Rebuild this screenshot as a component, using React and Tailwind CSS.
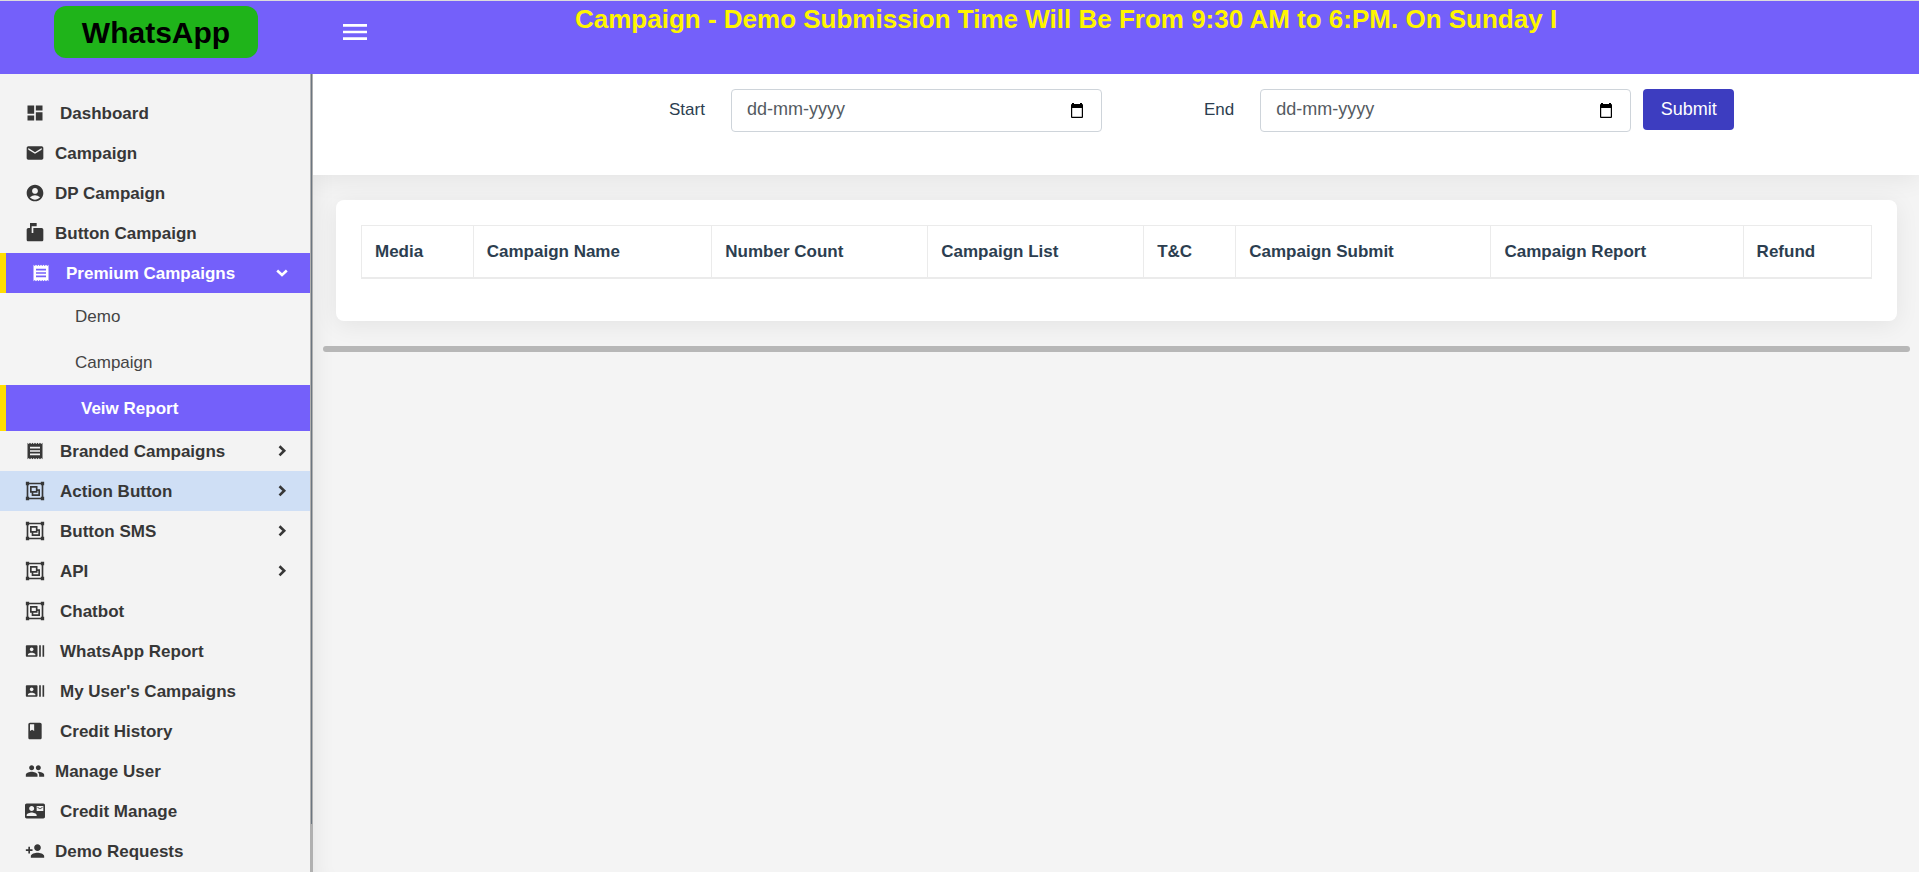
import React from "react";
import {
  MdDashboard,
  MdMail,
  MdAccountCircle,
  MdMarkunreadMailbox,
  MdReceipt,
  MdRecentActors,
  MdBook,
  MdGroup,
  MdContactMail,
  MdPersonAdd,
  MdMenu,
} from "react-icons/md";

function GroupIcon({ className }) {
  return (
    <svg viewBox="0 0 24 24" fill="currentColor" className={className} aria-hidden="true">
      <path d="M8,8V12H13V8H8M1,1H5V2H19V1H23V5H22V19H23V23H19V22H5V23H1V19H2V5H1V1M5,19V20H19V19H20V5H19V4H5V5H4V19H5M6,6H15V10H18V18H8V14H6V6M15,14H10V16H16V12H15V14Z" />
    </svg>
  );
}

function Chevron({ open }) {
  return (
    <svg
      viewBox="0 0 12 12"
      fill="none"
      stroke="currentColor"
      strokeWidth="2.600"
      className="size-3"
      aria-hidden="true"
    >
      <path d={open ? "M1.200 3.500L6 8L10.800 3.500" : "M3.500 1.200L8.200 5.800L3.500 10.400"} />
    </svg>
  );
}

const before = [
  { label: "Dashboard", icon: MdDashboard, wide: true },
  { label: "Campaign", icon: MdMail },
  { label: "DP Campaign", icon: MdAccountCircle },
  { label: "Button Campaign", icon: MdMarkunreadMailbox },
  { label: "Premium Campaigns", icon: MdReceipt, wide: true, active: true, open: true, more: true },
];

const after = [
  { label: "Branded Campaigns", icon: MdReceipt, wide: true, more: true },
  { label: "Action Button", icon: GroupIcon, wide: true, more: true, hover: true },
  { label: "Button SMS", icon: GroupIcon, wide: true, more: true },
  { label: "API", icon: GroupIcon, wide: true, more: true },
  { label: "Chatbot", icon: GroupIcon, wide: true },
  { label: "WhatsApp Report", icon: MdRecentActors, wide: true },
  { label: "My User's Campaigns", icon: MdRecentActors, wide: true },
  { label: "Credit History", icon: MdBook, wide: true },
  { label: "Manage User", icon: MdGroup },
  { label: "Credit Manage", icon: MdContactMail, wide: true },
  { label: "Demo Requests", icon: MdPersonAdd },
];

function NavItem({ item }) {
  const Icon = item.icon;
  const tone = item.active
    ? "border-l-6 border-[#ffdd00] bg-[#7460fa] text-white"
    : item.hover
      ? "bg-[#cfdff5] text-[#373737]"
      : "text-[#373737]";
  return (
    <li>
      <a href="#" className={`flex h-10 items-center pr-[22px] pl-[25px] text-[17px] font-bold ${tone}`}>
        <Icon className="size-5 shrink-0" />
        <span className={`flex-1 pt-[2px] ${item.wide ? "pl-[15px]" : "pl-[10px]"}`}>{item.label}</span>
        {item.more && <Chevron open={item.open} />}
      </a>
    </li>
  );
}

function DateField({ id, label }) {
  return (
    <div className="flex items-start">
      <label htmlFor={id} className="pt-2 pr-[26px] text-[17px] text-[#2c3e50]">
        {label}
      </label>
      <div className="flex h-[43px] w-[371px] items-center rounded border border-[#ced4da] bg-white pr-[18px] pl-[15px]">
        <input
          id={id}
          type="text"
          placeholder="dd-mm-yyyy"
          className="w-full min-w-0 bg-transparent pb-[2px] text-[18px] outline-none placeholder:text-[#545b62]"
        />
        <svg viewBox="0 0 12 15" className="h-[15px] w-3 shrink-0" aria-hidden="true">
          <path
            fill="#000"
            d="M1 0h2v1h6V0h2v1a1 1 0 0 1 1 1v12a1 1 0 0 1-1 1H1a1 1 0 0 1-1-1V2a1 1 0 0 1 1-1zM1.200 5v8.800h9.600V5z"
          />
        </svg>
      </div>
    </div>
  );
}

const columns = [
  ["Media", "w-[7.4%]"],
  ["Campaign Name", "w-[15.8%]"],
  ["Number Count", "w-[14.3%]"],
  ["Campaign List", "w-[14.3%]"],
  ["T&C", "w-[6.1%]"],
  ["Campaign Submit", "w-[16.9%]"],
  ["Campaign Report", "w-[16.7%]"],
  ["Refund", "w-[8.5%]"],
];

export default function App() {
  return (
    <div className="flex h-screen flex-col overflow-hidden bg-[#f4f4f4] font-['Liberation_Sans',Arial,sans-serif]">
      <header className="z-10 flex h-[74px] shrink-0 border-t border-[#dcdcdc] bg-[#7460fa]">
        <div className="flex w-[313px] shrink-0 items-start pt-[5px] pl-[54px]">
          <div className="flex h-[52px] w-[204px] items-center justify-center rounded-xl bg-[#1fb41a] text-[30px] font-bold text-black">
            WhatsApp
          </div>
        </div>
        <button type="button" aria-label="Toggle menu" className="flex h-[61px] w-[84px] items-center justify-center text-white">
          <MdMenu className="size-8" />
        </button>
        <div className="ml-[178px] text-[26px] leading-9 font-bold whitespace-nowrap text-[#fff500]">
          Campaign - Demo Submission Time Will Be From 9:30 AM to 6:PM. On Sunday I
        </div>
      </header>

      <div className="flex min-h-0 flex-1">
        <aside className="z-10 flex w-[313px] shrink-0 bg-[#f3f3f3]">
          <nav className="min-w-0 flex-1 overflow-hidden pt-[19px]">
            <ul>
              {before.map((item) => (
                <NavItem key={item.label} item={item} />
              ))}
              <li>
                <ul className="bg-[#f4f4f4] text-[17px]">
                  <li>
                    <a href="#" className="flex h-[46px] items-center pt-[2px] pl-[75px] text-[#444]">
                      Demo
                    </a>
                  </li>
                  <li>
                    <a href="#" className="flex h-[46px] items-center pt-[2px] pl-[75px] text-[#444]">
                      Campaign
                    </a>
                  </li>
                  <li>
                    <a
                      href="#"
                      className="flex h-[46px] items-center border-l-6 border-[#ffdd00] bg-[#7460fa] pt-[2px] pl-[75px] font-bold text-white"
                    >
                      Veiw Report
                    </a>
                  </li>
                </ul>
              </li>
              {after.map((item) => (
                <NavItem key={item.label} item={item} />
              ))}
            </ul>
          </nav>
          <div className="w-[3px] bg-[#b0b0b0]">
            <div className="mx-px h-[94%] bg-[#6c7680]" />
          </div>
        </aside>

        <main className="min-w-0 flex-1 shadow-[inset_20px_0_20px_-16px_rgba(0,0,0,0.06)]">
          <form className="flex h-[101px] items-start bg-white pt-[15px] pl-[356px] shadow-[0_4px_24px_rgba(0,0,0,0.07)]">
            <DateField id="start" label="Start" />
            <div className="ml-[102px]">
              <DateField id="end" label="End" />
            </div>
            <button type="button" className="ml-3 h-[41px] w-[91px] rounded bg-[#3d3dc0] text-[18px] text-white">
              Submit
            </button>
          </form>

          <div className="pr-[9px] pl-[10px]">
            <section className="mx-[13px] mt-[25px] h-[121px] rounded-lg bg-white p-[25px] shadow-[0_4px_24px_rgba(0,0,0,0.07)]">
              <table className="w-full table-fixed border-collapse border border-[#ebebeb] text-left text-[17px] text-[#2c3e50]">
                <thead>
                  <tr>
                    {columns.map(([name, width]) => (
                      <th
                        key={name}
                        scope="col"
                        className={`h-[52px] border border-b-2 border-[#ebebeb] pl-[13px] font-bold whitespace-nowrap ${width}`}
                      >
                        {name}
                      </th>
                    ))}
                  </tr>
                </thead>
              </table>
            </section>
            <div className="mt-[25px] h-[6px] rounded-full bg-[#b7b7b7]" />
          </div>
        </main>
      </div>
    </div>
  );
}
